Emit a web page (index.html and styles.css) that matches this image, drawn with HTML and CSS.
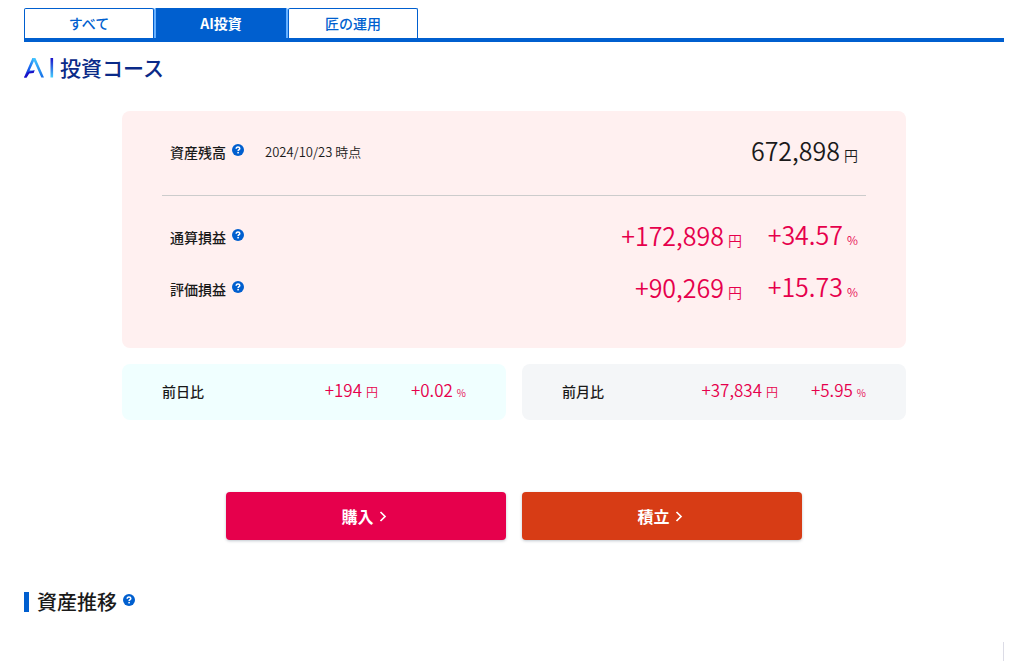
FILE: index.html
```html
<!DOCTYPE html>
<html lang="ja">
<head>
<meta charset="utf-8">
<meta name="viewport" content="width=device-width, initial-scale=1">
<title>AI投資コース</title>
<link rel="stylesheet" href="styles.css">
</head>
<body>
<svg class="defs" width="0" height="0" aria-hidden="true">
  <symbol id="help" viewBox="0 0 12 12">
    <circle cx="6" cy="6" r="6" fill="#005fcf"/>
    <path d="M4.2 4.7C4.2 3.5 5 2.9 6 2.9s1.8.6 1.8 1.5C7.8 5.6 6.1 5.6 6.1 7.1" fill="none" stroke="#fff" stroke-width="1.5"/>
    <rect x="5.3" y="7.9" width="1.6" height="1.5" fill="#fff"/>
  </symbol>
  <symbol id="chevron" viewBox="0 0 12 12">
    <path d="M1.5 2 6 6.5 1.5 11" fill="none" stroke="#fff" stroke-width="1.7"/>
  </symbol>
</svg>
<main class="page">
  <nav class="tabs">
    <a class="tab" href="#all">すべて</a>
    <a class="tab tab-active" href="#ai" aria-current="page">AI投資</a>
    <a class="tab" href="#takumi">匠の運用</a>
  </nav>

  <h1 class="course">
    <svg class="course-logo" viewBox="0 0 32 20" role="img" aria-label="AI">
      <defs>
        <linearGradient id="right" x1="0" y1="0" x2="0" y2="1"><stop offset="0" stop-color="#45c8ff"/><stop offset="1" stop-color="#1670e8"/></linearGradient>
        <linearGradient id="left" x1="0" y1="1" x2="1" y2="0"><stop offset="0" stop-color="#1a0fc4"/><stop offset=".5" stop-color="#1768f0"/><stop offset="1" stop-color="#45c8ff"/></linearGradient>
        <linearGradient id="bar" x1="0" y1="0" x2="0" y2="1"><stop offset="0" stop-color="#1a10c8"/><stop offset="1" stop-color="#45d0ff"/></linearGradient>
      </defs>
      <path d="M8.4 0H11L9.8 3.4 5.6 12.6H10.5L9.4 14.8H5L2.6 19.5H0Z" fill="url(#left)"/>
      <path d="M8.4 0H11.4L20 19.5H17.3L9.8 2.8Z" fill="url(#right)"/>
      <path d="M3.8 14.2 10.7 12.3 9.6 14.9 5.2 15.4 2.6 19.5H0Z" fill="#1a10c8"/>
      <rect x="26.5" y="0" width="2.6" height="19.5" fill="url(#bar)"/>
    </svg>
    <span>投資コース</span>
  </h1>

  <div class="summary">
    <section class="card balance">
      <div class="row total">
        <div class="label">資産残高<button class="help" type="button" aria-label="資産残高の説明"><svg><use href="#help"/></svg></button></div>
        <time class="date" datetime="2024-10-23">2024/10/23 時点</time>
        <div class="figure">672,898<small>円</small></div>
      </div>
      <div class="row gain">
        <div class="label">通算損益<button class="help" type="button" aria-label="通算損益の説明"><svg><use href="#help"/></svg></button></div>
        <div class="figure">+172,898<small>円</small></div>
        <div class="figure rate">+34.57<small class="percent">%</small></div>
      </div>
      <div class="row gain">
        <div class="label">評価損益<button class="help" type="button" aria-label="評価損益の説明"><svg><use href="#help"/></svg></button></div>
        <div class="figure">+90,269<small>円</small></div>
        <div class="figure rate">+15.73<small class="percent">%</small></div>
      </div>
    </section>
    <div class="changes">
      <section class="card change day">
        <div class="label">前日比</div>
        <div class="amount">+194<small>円</small></div>
        <div class="amount rate">+0.02<small class="percent">%</small></div>
      </section>
      <section class="card change month">
        <div class="label">前月比</div>
        <div class="amount">+37,834<small>円</small></div>
        <div class="amount rate">+5.95<small class="percent">%</small></div>
      </section>
    </div>
  </div>

  <div class="actions">
    <button class="action buy" type="button">購入<svg class="chevron"><use href="#chevron"/></svg></button>
    <button class="action save" type="button">積立<svg class="chevron"><use href="#chevron"/></svg></button>
  </div>

  <section class="history">
    <h2 class="heading">資産推移<button class="help" type="button" aria-label="資産推移の説明"><svg><use href="#help"/></svg></button></h2>
    <div class="chart"></div>
  </section>
</main>
</body>
</html>
```

FILE: styles.css
```css
* {
  box-sizing: border-box;
}

body {
  margin: 0;
  background: #fff;
  color: #1a1a1a;
  font-family: "Noto Sans CJK JP", "Noto Sans", sans-serif;
  font-size: 14px;
  line-height: 20px;
}

.defs {
  position: absolute;
}

.page {
  display: flex;
  flex-direction: column;
  min-height: 100vh;
  padding: 8px 12px 0 24px;
}

.tabs {
  display: flex;
  border-bottom: 4px solid #005fcf;
}

.tab {
  width: 130px;
  height: 30px;
  border: 1px solid #005fcf;
  border-bottom: 0;
  border-radius: 2px 2px 0 0;
  color: #005fcf;
  font-weight: 500;
  line-height: 28px;
  text-align: center;
  text-decoration: none;
}

.tab-active {
  width: 134px;
  border: solid #66b0ff;
  border-width: 0 2px;
  background: #005fcf;
  color: #fff;
  font-weight: 700;
  line-height: 30px;
}

.course {
  display: flex;
  align-items: center;
  gap: 4px;
  margin: 13px 0 0;
  color: #0a2a88;
  font-size: 21px;
  font-weight: 500;
  line-height: 25px;
}

.course-logo {
  width: 32px;
  height: 20px;
}

.summary {
  width: 100%;
  max-width: 784px;
  margin: 31px auto 0;
}

.card {
  border-radius: 8px;
}

.balance {
  padding: 0 40px 32px;
  background: #fff0f0;
}

.row {
  display: flex;
  align-items: center;
  height: 52px;
  padding: 0 8px 2px;
}

.total {
  height: 85px;
  margin-bottom: 16px;
  border-bottom: 1px solid #ccc;
}

.label {
  display: flex;
  align-items: center;
  margin-right: auto;
  font-weight: 500;
}

.help {
  display: flex;
  margin: 0 0 4px 6px;
  padding: 0;
  border: 0;
  background: none;
  cursor: pointer;
}

.help svg {
  width: 12px;
  height: 12px;
}

.total .label {
  margin-right: 21px;
}

.date {
  margin-right: auto;
  font-size: 13px;
  font-weight: 350;
}

.figure,
.amount {
  display: flex;
  align-items: baseline;
  justify-content: flex-end;
  gap: 4px;
}

.figure {
  font-size: 25px;
  font-weight: 350;
  line-height: 32px;
}

.figure small {
  font-size: 14px;
}

.figure .percent {
  font-size: 12px;
}

.gain,
.amount {
  color: #e6004c;
}

.gain .label {
  color: #1a1a1a;
}

.rate {
  min-width: 92px;
  margin-left: 24px;
}

.changes {
  display: grid;
  grid-template-columns: 1fr 1fr;
  gap: 16px;
  margin-top: 16px;
}

.change {
  display: flex;
  align-items: center;
  height: 56px;
  padding: 0 40px 2px;
}

.amount {
  font-size: 17px;
  font-weight: 350;
}

.day {
  background: #f0ffff;
}

.month {
  background: #f4f6f8;
}

.amount small {
  font-size: 12px;
}

.amount .percent {
  font-size: 10px;
}

.amount.rate {
  min-width: 56px;
  margin-left: 32px;
}

.actions {
  display: flex;
  justify-content: center;
  gap: 16px;
  margin-top: 72px;
}

.action {
  display: flex;
  align-items: center;
  justify-content: center;
  gap: 5px;
  width: 280px;
  height: 48px;
  padding: 0 0 1px;
  border: 0;
  border-radius: 4px;
  box-shadow: 0 1px 3px rgba(0, 30, 60, 0.25);
  color: #fff;
  font: 700 16px/24px "Noto Sans CJK JP", sans-serif;
  cursor: pointer;
}

.buy {
  background: #e6004c;
}

.save {
  background: #d73c15;
}

.chevron {
  width: 12px;
  height: 12px;
}

.history {
  display: flex;
  flex: 1;
  flex-direction: column;
  margin-top: 52px;
}

.heading {
  display: flex;
  align-items: center;
  margin: 0;
  padding-left: 8px;
  border-left: 5px solid #005fcf;
  font-size: 20px;
  font-weight: 500;
  line-height: 20px;
}

.chart {
  flex: 1;
  margin-top: 30px;
  border-right: 1px solid #dcdce6;
}
```
